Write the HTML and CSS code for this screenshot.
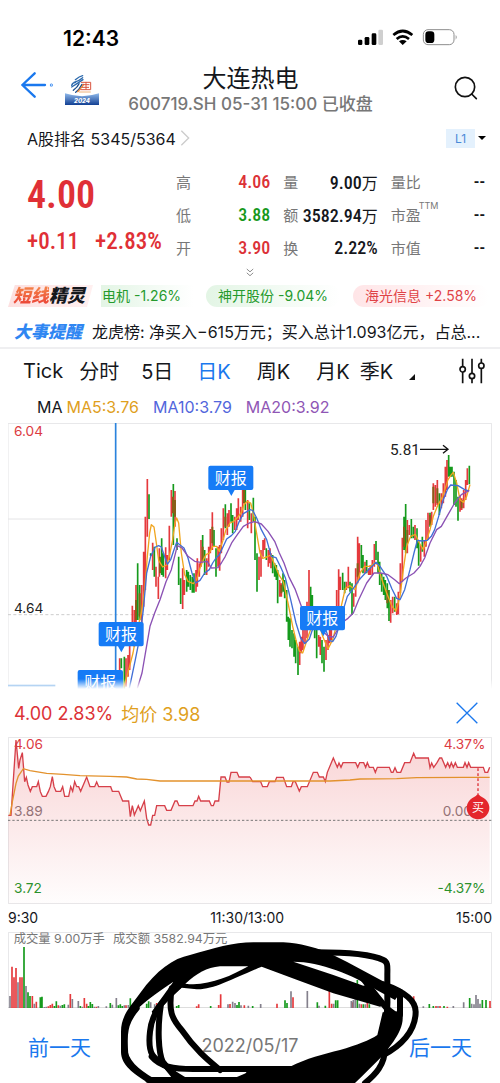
FILE: index.html
```html
<!DOCTYPE html>
<html lang="zh-CN">
<head>
    <meta charset="UTF-8">
    <meta name="viewport" content="width=device-width, initial-scale=1.0">
    <title>大连热电 600719.SH</title>
    <link rel="stylesheet" href="styles.css">
</head>
<body>
    <div class="status-bar">
        <span class="clock">12:43</span>
        <svg class="status-icons" viewBox="0 0 300 54" aria-hidden="true">
            <rect x="0" y="32" width="13" height="16" rx="4"/>
            <rect x="20" y="24" width="14" height="24" rx="4"/>
            <rect x="41" y="13" width="14" height="35" rx="4"/>
            <rect x="61" y="2" width="14" height="46" rx="4" fill="#cfcfcf"/>
            <g fill="none" stroke="#000" stroke-width="8">
                <path d="M106 18Q134-6 163 18"/>
                <path d="M116 30Q134 14 153 30"/>
            </g>
            <path d="M123 37Q134 29 146 37L134 48Z"/>
            <rect x="196" y="2" width="92" height="45" rx="14" fill="none" stroke="#8e8e8e" stroke-width="3"/>
            <rect x="202" y="7" width="27" height="35" rx="10"/>
            <path d="M293 18Q299 24 293 32Z" fill="#8e8e8e"/>
        </svg>
    </div>

    <header class="header">
        <a class="back" href="#" aria-label="返回">
            <svg viewBox="0 0 96 78" fill="none" stroke="#1a78ee" stroke-width="7" stroke-linecap="round" stroke-linejoin="round">
                <path d="M41 4L4 39L41 74M4 39H72"/>
                <circle cx="91" cy="39" r="1"/>
            </svg>
        </a>
        <svg class="event-logo" viewBox="0 0 102 96" aria-hidden="true">
            <defs>
                <linearGradient id="band" x1="0" y1="0" x2="0" y2="1">
                    <stop offset="0" stop-color="#8fb9ea"/>
                    <stop offset="1" stop-color="#123f93"/>
                </linearGradient>
            </defs>
            <path d="M0 61Q51 78 102 61V96H0Z" fill="url(#band)"/>
            <g fill="none" stroke-width="4" stroke-linecap="round">
                <path d="M31 20Q43 10 53 8M27 28Q42 24 53 14M20 37Q22 29 32 28M20 42Q38 31 54 20" stroke="#2b69ad"/>
                <path d="M25 52Q38 42 42 32M32 58Q43 50 51 34" stroke="#1b4e8d"/>
                <path d="M38 56Q49 45 56 34" stroke="#e68a37"/>
                <path d="M49 28H77V50H47M54 35H72M52 43H71M63 28V48" stroke="#d9553f" stroke-width="3"/>
                <path d="M43 57H76" stroke="#e68a37" stroke-width="2"/>
            </g>
            <text x="51" y="89" class="logo-year">2024</text>
        </svg>
        <div class="title">
            <h1>大连热电</h1>
            <p>600719.SH 05-31 15:00 已收盘</p>
        </div>
        <button class="search" aria-label="搜索">
            <svg viewBox="0 0 72 72" fill="none" stroke="#111" stroke-width="5" stroke-linecap="round">
                <circle cx="33" cy="33" r="29"/>
                <path d="M53 54L67 68"/>
            </svg>
        </button>
    </header>

    <div class="rank">
        <a href="#">A股排名 5345/5364<svg viewBox="0 0 30 48" fill="none" stroke="#ccc" stroke-width="4"><path d="M4 2L26 24L4 46"/></svg></a>
        <button class="level"><span>L1</span></button>
    </div>

    <section class="quote">
        <div class="price">
            <strong>4.00</strong>
            <div><span>+0.11</span><span>+2.83%</span></div>
        </div>
        <dl>
            <div><dt>高</dt><dd class="up">4.06</dd></div>
            <div><dt>低</dt><dd class="down">3.88</dd></div>
            <div><dt>开</dt><dd class="up">3.90</dd></div>
        </dl>
        <dl>
            <div><dt>量</dt><dd>9.00<i>万</i></dd></div>
            <div><dt>额</dt><dd>3582.94<i>万</i></dd></div>
            <div><dt>换</dt><dd>2.22%</dd></div>
        </dl>
        <dl>
            <div><dt>量比</dt><dd>--</dd></div>
            <div><dt>市盈<sup>TTM</sup></dt><dd>--</dd></div>
            <div><dt>市值</dt><dd>--</dd></div>
        </dl>
    </section>
    <button class="expand" aria-label="展开">
        <svg viewBox="0 0 24 28" fill="none" stroke="#888" stroke-width="3"><path d="M2 3L12 12L22 3M2 15L12 24L22 15"/></svg>
    </button>

    <div class="ticker">
        <div class="ticker-name"><b>短线</b>精灵</div>
        <div class="pills">
            <span class="pill fall first">电机 -1.26%</span>
            <span class="pill fall">神开股份 -9.04%</span>
            <span class="pill rise">海光信息 +2.58%</span>
        </div>
    </div>

    <div class="news">
        <b>大事提醒</b>
        <a href="#">龙虎榜: 净买入−615万元；买入总计1.093亿元，占总...</a>
    </div>

    <nav class="tabs">
        <button class="tick">Tick</button>
        <button>分时</button>
        <button>5日</button>
        <button class="k active">日K</button>
        <button class="k">周K</button>
        <button class="k">月K</button>
        <button class="more">季K</button>
        <button class="settings" aria-label="指标设置">
            <svg viewBox="0 0 78 78" fill="none" stroke="#111" stroke-width="5">
                <path d="M11 2V25M11 42V76M39 2V46M39 63V76M67 2V15M67 32V76"/>
                <circle cx="11" cy="34" r="8"/>
                <circle cx="39" cy="54" r="8"/>
                <circle cx="67" cy="23" r="8"/>
            </svg>
        </button>
    </nav>

    <div class="ma">
        <span>MA</span>
        <span class="ma5">MA5:3.76</span>
        <span class="ma10">MA10:3.79</span>
        <span class="ma20">MA20:3.92</span>
    </div>

    <svg class="chart" viewBox="0 0 1452 798">
        <defs>
            <linearGradient id="fade" x1="0" y1="0" x2="0" y2="1">
                <stop offset="0" stop-color="#fff" stop-opacity="0"/>
                <stop offset="1" stop-color="#fff"/>
            </linearGradient>
        </defs>
        <path class="frame" d="M0 798V1H1451V798M0 288H1451"/>
        <path class="dash" d="M0 575H1451"/>

        <g transform="translate(186 111)">
            <path class="up-bar" d="M149 595V690M168 595V680M174 585V650M179 555V630M187 437V510M193 450V560M198 375V490M215 375V490M221 275V440M226 170V390M232 57V230M248 248V330M258 320V380M265 350V417M268 265V350M287 262V355M292 285V330M298 197V300M304 90V170M315 93V200M338 325V447M343 360V405M378 330V395M382 295V380M388 310V350M393 240V320M410 295V345M416 260V320M421 207V280M427 157V270M444 260V320M449 255V332M454 205V280M460 145V240M472 160V225M477 150V200M494 170V210M500 145V210M505 115V180M512 140V185M518 80V170M522 80V130M533 120V205M544 160V220M567 290V360M573 270V350M579 240V290M584 235V270M595 270V320M600 265V310"/>
            <path class="down-bar" d="M154 595V625M163 590V690M203 310V480M209 375V480M237 103V177M242 280V288M253 260V350M275 235V345M280 280V350M310 72V255M321 235V270M326 290V375M332 355V432M350 330V395M355 335V380M361 345V390M367 350V398M372 340V398M398 225V305M404 270V345M432 210V260M438 265V350M466 133V205M483 130V185M488 165V220M526 80V150M538 130V180M550 113V185M555 170V300M561 280V395M589 265V300"/>
            <path class="mix-bar" d="M209 400V470M198 420V480M270 290V340M315 120V170M398 260V300M427 200V250M466 170V200M522 90V130M309 110V160"/>
        </g>
        <g transform="translate(786 51)">
            <path class="up-bar" d="M3 340V385M29 420V470M34 430V470M89 605V675M94 590V640M99 570V630M105 540V610M111 485V595M117 390V500M146 585V620M151 590V645M168 600V660M174 585V630M179 560V610M184 570V600M200 450V500M206 388V500M211 410V450M229 425V450M235 380V445M251 460V500M257 385V470M263 290V430M268 310V420M285 365V400M296 385V405M301 375V405M307 360V405M313 312V380M362 480V548M368 470V520M380 490V525M385 455V523M391 370V460M397 293V425M412 240V340M418 255V285M435 255V300M452 315V365M463 300V350M468 240V320M474 218V300M485 215V255M490 130V210M496 135V200M502 120V195M514 160V205M520 130V190M526 80V170M531 60V150M570 165V215M575 175V210M581 150V205M587 120V180M592 85V135"/>
            <path class="down-bar" d="M8 345V400M14 370V410M19 375V420M23 390V490M39 400V455M44 420V475M50 450V545M55 530V600M60 535V620M66 570V625M72 580V650M77 600V670M84 620V705M122 440V500M127 465V500M134 540V595M140 570V655M156 600V670M162 620V695M218 398V450M224 425V460M240 425V455M246 430V525M274 315V385M279 345V400M290 360V400M318 303V360M324 335V400M329 365V435M335 400V455M341 410V465M346 420V480M352 430V505M357 450V543M374 470V515M402 230V330M407 192V340M424 237V295M430 260V295M441 265V325M446 300V377M457 290V335M480 218V260M508 160V225M536 45V110M541 80V110M546 80V110M552 95V195M558 120V200M564 170V242M598 77V133"/>
            <path class="mix-bar" d="M34 435V460M402 260V320M412 270V310M490 140V190M502 145V190M480 225V255M263 370V410M352 450V490M575 180V205"/>
        </g>

        <g class="line">
            <path class="line5" d="M346 796L360 748L375 690L388 620L400 570L410 500L418 400L425 330L430 305L438 312L445 360L452 412L464 432L476 426L484 400L494 350L501 300L506 285L512 300L520 390L530 455L540 475L556 482L566 470L574 440L586 410L594 395L604 390L614 370L626 370L634 385L644 355L654 320L666 300L676 296L690 282L700 268L708 245L718 235L728 240L736 270L744 320L756 390L764 406L776 402L788 396L800 425L814 458L826 476L840 540L854 610L866 660L874 684L884 690L894 660L904 630L916 600L930 590L944 640L960 678L974 650L990 590L1002 540L1012 496L1026 488L1042 500L1056 450L1070 430L1086 430L1100 420L1108 424L1120 465L1136 510L1152 550L1164 564L1176 520L1186 440L1196 370L1208 340L1222 334L1234 360L1246 380L1256 350L1266 320L1276 280L1288 250L1304 220L1320 170L1330 155L1336 148L1346 180L1356 230L1366 238L1376 220L1386 185"/>
            <path class="line10" d="M364 796L382 710L396 640L406 560L416 450L428 400L442 372L452 368L460 372L468 395L478 424L488 410L498 380L506 358L516 366L528 375L540 405L552 450L563 480L576 472L590 450L604 440L614 420L624 405L634 395L646 370L656 348L670 338L682 325L694 295L706 272L718 265L726 260L734 262L746 285L760 320L776 350L790 400L804 404L818 432L832 464L848 530L864 600L878 645L890 662L904 648L920 600L936 590L950 610L964 652L974 656L984 640L996 600L1006 560L1018 520L1032 502L1054 470L1072 450L1092 430L1104 418L1116 430L1136 460L1152 498L1166 526L1176 530L1190 500L1206 440L1218 390L1228 352L1242 354L1258 352L1270 340L1280 320L1292 280L1306 230L1318 200L1328 186L1350 188L1370 200L1382 204"/>
            <path class="line20" d="M388 796L402 750L414 680L426 610L440 570L456 530L474 476L490 440L508 368L522 375L540 400L560 415L578 418L598 415L610 435L630 434L640 420L652 400L672 358L688 335L706 310L724 300L740 296L760 303L780 325L800 355L814 390L828 420L842 460L862 500L880 550L900 600L940 620L960 640L976 642L1000 600L1020 586L1036 570L1052 530L1076 480L1098 450L1118 450L1140 455L1160 470L1174 482L1194 465L1218 450L1236 430L1250 405L1266 360L1286 320L1300 310L1320 275L1340 240L1360 215L1384 202"/>
        </g>

        <path class="cursor" d="M323 0V798"/>
        <path class="cursor" d="M0 788H142"/>
        <g class="flag">
            <path d="M607 128h123q6 0 6 6v61q0 6-6 6H680l-10 18l-10-18H607q-6 0-6-6V134q0-6 6-6Z"/>
            <text x="668" y="182">财报</text>
            <path d="M278 597h123q6 0 6 6v61q0 6-6 6H350l-10 18l-10-18H278q-6 0-6-6V603q0-6 6-6Z"/>
            <text x="339" y="651">财报</text>
            <path d="M215 741h124q6 0 6 6v60H209V747q0-6 6-6Z"/>
            <text x="277" y="795">财报</text>
            <path d="M882 549h123q6 0 6 6v61q0 6-6 6H956l-10 18l-10-18H882q-6 0-6-6V555q0-6 6-6Z"/>
            <text x="943" y="603">财报</text>
        </g>
        <rect x="0" y="768" width="1452" height="30" fill="url(#fade)"/>
        <text class="axis up-text" x="18" y="40">6.04</text>
        <text class="axis" x="18" y="570">4.64</text>
        <text class="peak" x="1146" y="95">5.81</text>
        <path d="M1236 79H1320M1305 67L1320 79L1305 91" fill="none" stroke="#111" stroke-width="4"/>
    </svg>

    <div class="day-head">
        <span class="up">4.00 2.83%</span>
        <span class="avg">均价 3.98</span>
        <button aria-label="关闭">
            <svg viewBox="0 0 66 66" stroke="#1a78ee" stroke-width="4"><path d="M2 2L64 64M64 2L2 64"/></svg>
        </button>
    </div>

    <svg class="chart" viewBox="0 0 1452 501">
        <defs>
            <linearGradient id="area" gradientUnits="userSpaceOnUse" x1="0" y1="150" x2="0" y2="642">
                <stop offset="0" stop-color="#e33b3f" stop-opacity=".22"/>
                <stop offset="1" stop-color="#e33b3f" stop-opacity=".01"/>
            </linearGradient>
        </defs>
        <path class="frame" d="M1 1H1451V500H1Z"/>
        <text class="axis up-text" x="18" y="37">4.06</text>
        <text class="axis grey-text" x="18" y="236">3.89</text>
        <text class="axis down-text" x="18" y="469">3.72</text>
        <text class="axis up-text end" x="1432" y="37">4.37%</text>
        <text class="axis grey-text end" x="1432" y="236">0.00%</text>
        <text class="axis down-text end" x="1432" y="469">-4.37%</text>
        <g transform="translate(-24 -141)">
            <path fill="url(#area)" d="M25 642V376H33L40 270L48 150L56 235L60 210L67 188L74 275L79 262L84 285L91 304L97 290H110L115 275L121 305L127 319H138L145 305L151 290L157 260L162 290L168 304H182L188 290L194 319H206L212 290L218 304L224 275L230 290H236L242 304L260 261L270 290H284L290 276L296 290H332L337 304H356L368 333H386L391 380L397 347L403 375L415 347L421 362L433 333L440 385L446 405H452L458 376H464L470 347H494L500 361H513L525 333H531L537 347H579L585 333H591L596 319L602 333H628L634 347H640L645 333H656L663 261H675L681 276H687L693 247H711L717 261H750V642Z"/>
            <path class="price-line" d="M25 376H33L40 270L48 150L56 235L60 210L67 188L74 275L79 262L84 285L91 304L97 290H110L115 275L121 305L127 319H138L145 305L151 290L157 260L162 290L168 304H182L188 290L194 319H206L212 290L218 304L224 275L230 290H236L242 304L260 261L270 290H284L290 276L296 290H332L337 304H356L368 333H386L391 380L397 347L403 375L415 347L421 362L433 333L440 385L446 405H452L458 376H464L470 347H494L500 361H513L525 333H531L537 347H579L585 333H591L596 319L602 333H628L634 347H640L645 333H656L663 261H675L681 276H687L693 247H711L717 261H750"/>
            <path class="avg-line" d="M30 376L38 330L48 280L55 258L70 236L90 242L140 250L190 253L240 257L330 259L380 261L410 267L440 268L480 273H750"/>
        </g>
        <g transform="translate(726 -141)">
            <path fill="url(#area)" d="M0 642V261L8 275H32L38 290H52L58 275H75L80 262H100L110 290H124L129 275H136L148 303L154 290H172L190 247H202L208 261H220L226 275L232 247L250 204L262 232L267 219L273 232L279 218H317L323 232L329 218H341L347 232L352 218L358 232H370L376 247L382 232H418L424 247H429L435 233L441 247H452L464 218H480L491 190L497 204H535L540 233L545 219L551 232L561 218L569 204H575L587 232L593 218L599 232L604 218L610 232L616 218L622 232H640L645 218L651 232L656 218L662 232H700L705 247H713L719 232V642Z"/>
            <path class="price-line" d="M0 261L8 275H32L38 290H52L58 275H75L80 262H100L110 290H124L129 275H136L148 303L154 290H172L190 247H202L208 261H220L226 275L232 247L250 204L262 232L267 219L273 232L279 218H317L323 232L329 218H341L347 232L352 218L358 232H370L376 247L382 232H418L424 247H429L435 233L441 247H452L464 218H480L491 190L497 204H535L540 233L545 219L551 232L561 218L569 204H575L587 232L593 218L599 232L604 218L610 232L616 218L622 232H640L645 218L651 232L656 218L662 232H700L705 247H713L719 232"/>
            <path class="avg-line" d="M0 273H240L300 270L330 267L440 266L500 263L640 262H719"/>
        </g>
        <path class="mid" d="M0 250H1452"/>
        <path d="M1410 94V172" stroke="#dd3338" stroke-width="4" stroke-dasharray="8 7"/>
        <path d="M1410 170Q1416 178 1428 184A34 34 0 1 1 1392 184Q1404 178 1410 170Z" fill="#e4262c"/>
        <text class="buy" x="1410" y="226">买</text>
    </svg>
    <div class="times"><span>9:30</span><span>11:30/13:00</span><span>15:00</span></div>

    <div class="bottom">
        <svg class="chart" viewBox="0 0 1452 228">
            <path class="frame" d="M1 228V1H1451V228"/>
            <path d="M0 228H1452" stroke="#bbb" stroke-width="3"/>
            <g class="volume" transform="translate(-24 -21)">
                <path class="up-bar" d="M36 249V125M42 249V157M48 249V129M60 249V157M66 249V157M97 249V213M109 249V230M145 249V244M151 249V240M157 249V236M175 249V241M211 249V207M253 249V219M260 249V236M289 249V245M378 249V241M470 249V234M590 249V244M596 249V238M656 249V240M662 249V208M690 249V237M733 249V241M831 249V236M879 249V217M988 249V191M995 249V236M1058 249V232M1084 249V238M1102 249V232M1241 249V214M1308 249V243M1320 249V243M1342 249V245M1470 249V228"/>
                <path class="down-bar" d="M72 249V66M84 249V202M90 249V213M121 249V217M126 249V215M163 249V243M169 249V229M187 249V240M193 249V238M241 249V243M265 249V243M271 249V231M277 249V237M331 249V234M355 249V241M361 249V238M367 249V243M391 249V220M410 249V242M440 249V236M446 249V229M530 249V243M536 249V240M632 249V243M711 249V240M717 249V231M758 249V243M855 249V226M861 249V234M952 249V232M976 249V242M1007 249V226M1013 249V226M1072 249V165M1090 249V238M1108 249V238M1288 249V237M1300 249V243M1332 249V243M1409 249V219M1447 249V225M1458 249V225"/>
                <path class="flat-bar" d="M30 249V213M54 249V172M78 249V183M103 249V236M133 249V246M139 249V245M181 249V242M205 249V239M217 249V222M235 249V228M247 249V245M283 249V245M295 249V243M319 249V244M337 249V239M349 249V219M373 249V241M385 249V240M400 249V240M452 249V232M464 249V238M684 249V238M698 249V230M705 249V234M723 249V241M745 249V242M782 249V237M873 249V199M922 249V198M957 249V242M1001 249V236M1054 249V228M1060 249V225M1066 249V222M1078 249V236M1096 249V238M1270 249V244M1314 249V243M1360 249V243M1391 249V232M1415 249V236M1422 249V238M1428 249V210M1434 249V222M1440 249V236"/>
            </g>
            <text class="note" x="17" y="34">成交量 9.00万手</text>
            <text class="note" x="315" y="34">成交额 3582.94万元</text>
        </svg>
        <div class="day-nav">
            <button>前一天</button>
            <time>2022/05/17</time>
            <button>后一天</button>
        </div>
        <svg class="scribble" viewBox="0 21 1500 453" preserveAspectRatio="none" aria-hidden="true">
            <path class="ink" d="M363 320C363 270 395 240 420 205C470 135 520 100 570 90C640 70 700 52 760 52H850C905 55 940 68 975 78L1040 110L1170 180L1200 205L1185 225L1130 195C1060 150 960 110 880 110L1000 150L1090 182L1110 176L1155 240L1140 245L1000 205L900 168L785 125C700 160 640 195 590 193L545 188C500 230 480 250 465 275L455 260L520 170C470 205 420 235 395 275C375 310 385 370 385 390C400 430 430 450 480 474H445C400 445 363 420 363 380Z"/>
            <path class="hole" d="M556 176C590 145 620 128 660 124H745C690 155 620 185 556 176Z"/>
            <path class="ink" d="M720 474L740 440L870 425C920 400 970 388 1020 375C1070 360 1110 345 1132 330L1148 262L1205 258C1215 290 1200 320 1180 350L1150 390C1120 420 1090 450 1065 474Z"/>
            <g class="pen">
                <path d="M410 250C380 285 373 310 373 370C373 410 410 440 460 470"/>
                <path d="M540 180C480 230 455 270 450 320C442 390 460 400 500 425L545 470"/>
                <path d="M482 245C472 310 475 380 488 410L520 450"/>
                <path d="M515 190C505 260 515 280 545 315C590 380 630 410 660 435"/>
                <path d="M455 395C480 425 520 432 580 432H890"/>
                <path d="M445 465H760"/>
                <path d="M520 445L560 470H700L760 445"/>
                <path d="M950 82C1040 82 1110 86 1150 105C1165 112 1162 125 1162 150V220C1165 280 1150 310 1145 350"/>
                <path d="M1150 178C1200 195 1247 220 1247 260C1247 320 1200 365 1150 390"/>
                <path d="M1200 200V270M1080 150L1160 250L1180 265"/>
                <path d="M1155 370C1155 420 1125 450 1095 474"/>
            </g>
        </svg>
    </div>
</body>
</html>
```
FILE: styles.css
```css
* { box-sizing: border-box; }
body { margin: 0; background: #fff; color: #15171c; font-family: Inter, "Noto Sans CJK SC", sans-serif; font-size: 15px; overflow-x: hidden; }
button { border: 0; padding: 0; background: none; font: inherit; color: inherit; }
a { color: inherit; text-decoration: none; }
h1, p, dl, dd { margin: 0; }
svg { display: block; }
i { font-style: normal; }
.up { color: #dc3237; }
.down { color: #16981b; }

.status-bar { display: flex; justify-content: space-between; align-items: center; padding: 16px 42px 0 63px; height: 60px; color: #000; }
.clock { font-size: 21px; font-weight: 600; }
.status-icons { width: 100px; height: 18px; }

.header { display: grid; grid-template-columns: 32px 34px 1fr 76px; column-gap: 12px; height: 60px; padding: 4px 22px 0 21px; }
.back svg { width: 32px; height: 26px; margin-top: 8px; }
.event-logo { width: 34px; height: 32px; margin-top: 9px; }
.logo-year { font: italic 800 18px Inter, sans-serif; fill: #fff; text-anchor: middle; }
.title { text-align: center; }
.title h1 { font-size: 24px; line-height: 30px; font-weight: 400; }
.title p { display: flex; justify-content: center; font-size: 17px; line-height: 20px; font-weight: 500; color: #777; white-space: nowrap; }
.search { justify-self: end; align-self: start; margin-top: 12px; }
.search svg { width: 24px; height: 24px; }

.rank { display: flex; justify-content: space-between; align-items: center; height: 36px; padding: 0 14px 0 27px; }
.rank a { display: flex; align-items: center; gap: 4px; font-size: 16px; }
.rank a svg { width: 10px; height: 16px; }
.level { display: flex; align-items: center; gap: 3px; }
.level span { width: 29px; line-height: 19px; font-size: 12px; color: #4a8ad8; background: #e4f1fd; }
.level::after { content: ""; border: 4px solid transparent; border-top-color: #000; border-bottom: 0; }

.quote { display: grid; grid-template-columns: 136px 1fr 1fr 1fr; column-gap: 13px; margin-top: 9px; padding: 0 15px 0 27px; }
.price { color: #e03036; font-family: "Roboto Condensed", "Liberation Sans Narrow", Roboto, sans-serif; font-weight: 500; }
.price strong { display: block; font-size: 38px; line-height: 60px; font-weight: 600; }
.price div { display: flex; gap: 16px; font-size: 23px; line-height: 34px; }
.quote dl div { display: flex; justify-content: space-between; align-items: center; height: 33px; white-space: nowrap; }
.quote dt { color: #777; position: relative; }
.quote dt sup { position: absolute; left: 28px; top: -4px; font-size: 9px; line-height: 12px; }
.quote dd { font: 500 18px "Roboto Condensed", "Liberation Sans Narrow", Roboto, sans-serif; }
.quote dd i { font: 400 16px "Noto Sans CJK SC", sans-serif; }
.expand { display: block; height: 16px; margin: 0 auto; }
.expand svg { width: 8px; height: 9px; }

.ticker { display: flex; gap: 8px; height: 22px; margin: 5px 0 0 8px; overflow: hidden; }
.ticker-name { width: 85px; flex: none; padding-left: 5px; font-size: 18px; line-height: 21px; font-weight: 900; font-style: italic; background: linear-gradient(90deg, #fde0e0, #fff0f0); clip-path: polygon(8% 0, 100% 0, 93% 100%, 0 100%); }
.ticker-name b { color: transparent; font-weight: 900; background: linear-gradient(#f58a4a, #ea3d35); background-clip: text; -webkit-background-clip: text; }
.pills { display: flex; gap: 13px; white-space: nowrap; }
.pill { font-size: 14px; line-height: 22px; padding: 0 12px; border-radius: 11px; }
.pill.first { padding-left: 1px; border-radius: 0; }
.fall { color: #259a2d; background: linear-gradient(90deg, #e3f5e5, #fff); }
.rise { color: #df4347; background: linear-gradient(90deg, #ffe5e7, #fff); }

.news { display: flex; gap: 10px; margin-top: 10px; padding: 0 14px; line-height: 30px; border-bottom: 2px solid #efeff1; }
.news b { flex: none; font-size: 17px; font-weight: 900; font-style: italic; color: #2f86f2; }
.news a { font-size: 16px; overflow: hidden; text-overflow: ellipsis; white-space: nowrap; }

.tabs { display: flex; gap: 22px; align-items: center; height: 43px; padding: 0 15px 0 23px; font-size: 20px; white-space: nowrap; }
.tabs .tick { margin-right: -6px; }
.tabs .k { padding: 0 2px; }
.tabs .active { color: #1a78ee; }
.more { display: flex; align-items: center; gap: 16px; margin-left: -14px; }
.more::after { content: ""; margin-top: 12px; border: 3px solid #111; border-top-color: transparent; border-left-color: transparent; }
.settings { margin-left: auto; }
.settings svg { width: 26px; height: 26px; }

.ma { display: flex; gap: 14px; height: 31px; padding-left: 37px; font-size: 16px; line-height: 31px; }
.ma span:first-child { margin-right: -10px; }
.ma5, .avg { color: #e0a01d; }
.ma10 { color: #5266dc; }
.ma20 { color: #8f56b5; }

.chart { width: calc(100% - 16px); height: auto; margin: 0 8px; }
.chart text { font-family: Inter, "Noto Sans CJK SC", sans-serif; fill: #222; }
.frame { fill: none; stroke: #e4e4e6; stroke-width: 3; }
.dash { stroke: #ccc; stroke-width: 3; stroke-dasharray: 9 7; }
.up-bar { stroke: #e5393c; stroke-width: 5; }
.down-bar { stroke: #159a1c; stroke-width: 5; }
.mix-bar { stroke: #866018; stroke-width: 6; }
.flat-bar { stroke: #84808c; stroke-width: 5; }
.line { fill: none; stroke-width: 4; stroke-linejoin: round; }
.line5 { stroke: #f0a51f; }
.line10 { stroke: #416fd6; }
.line20 { stroke: #8b51b4; }
.cursor { stroke: #2b83dd; stroke-width: 5; }
.flag path { fill: #167bf6; }
.chart .flag text { fill: #fff; font-size: 48px; text-anchor: middle; }
.chart .axis { font-size: 41px; }
.chart .up-text { fill: #dc3b42; }
.chart .down-text { fill: #25942a; }
.chart .grey-text { fill: #887a7e; }
.chart .end { text-anchor: end; }
.chart .peak { font-family: Roboto, sans-serif; font-size: 46px; }
.price-line { fill: none; stroke: #d6404a; stroke-width: 4; }
.avg-line { fill: none; stroke: #e3922d; stroke-width: 4; }
.mid { stroke: #777; stroke-width: 3; stroke-dasharray: 7 6; }
.chart .buy { fill: #fff; font-size: 36px; text-anchor: middle; }
.chart .note { fill: #777; font-size: 37px; }

.day-head { display: flex; align-items: center; gap: 8px; height: 48px; padding: 0 22px 0 14px; font-size: 18px; }
.day-head button { margin-left: auto; }
.day-head svg { width: 22px; height: 22px; }
.times { display: flex; justify-content: space-between; padding: 0 8px; font-size: 14px; line-height: 28px; }

.bottom { position: relative; overflow: hidden; }
.day-nav { display: flex; justify-content: space-between; align-items: center; height: 75px; padding: 0 28px; font-size: 21px; color: #1a78ee; }
.day-nav time { font-size: 18px; color: #777; }
.scribble { position: absolute; inset: 0; width: 100%; height: 100%; pointer-events: none; }
.ink { fill: #000; }
.hole { fill: #fff; }
.pen { fill: none; stroke: #000; stroke-width: 18; stroke-linecap: round; }
```
